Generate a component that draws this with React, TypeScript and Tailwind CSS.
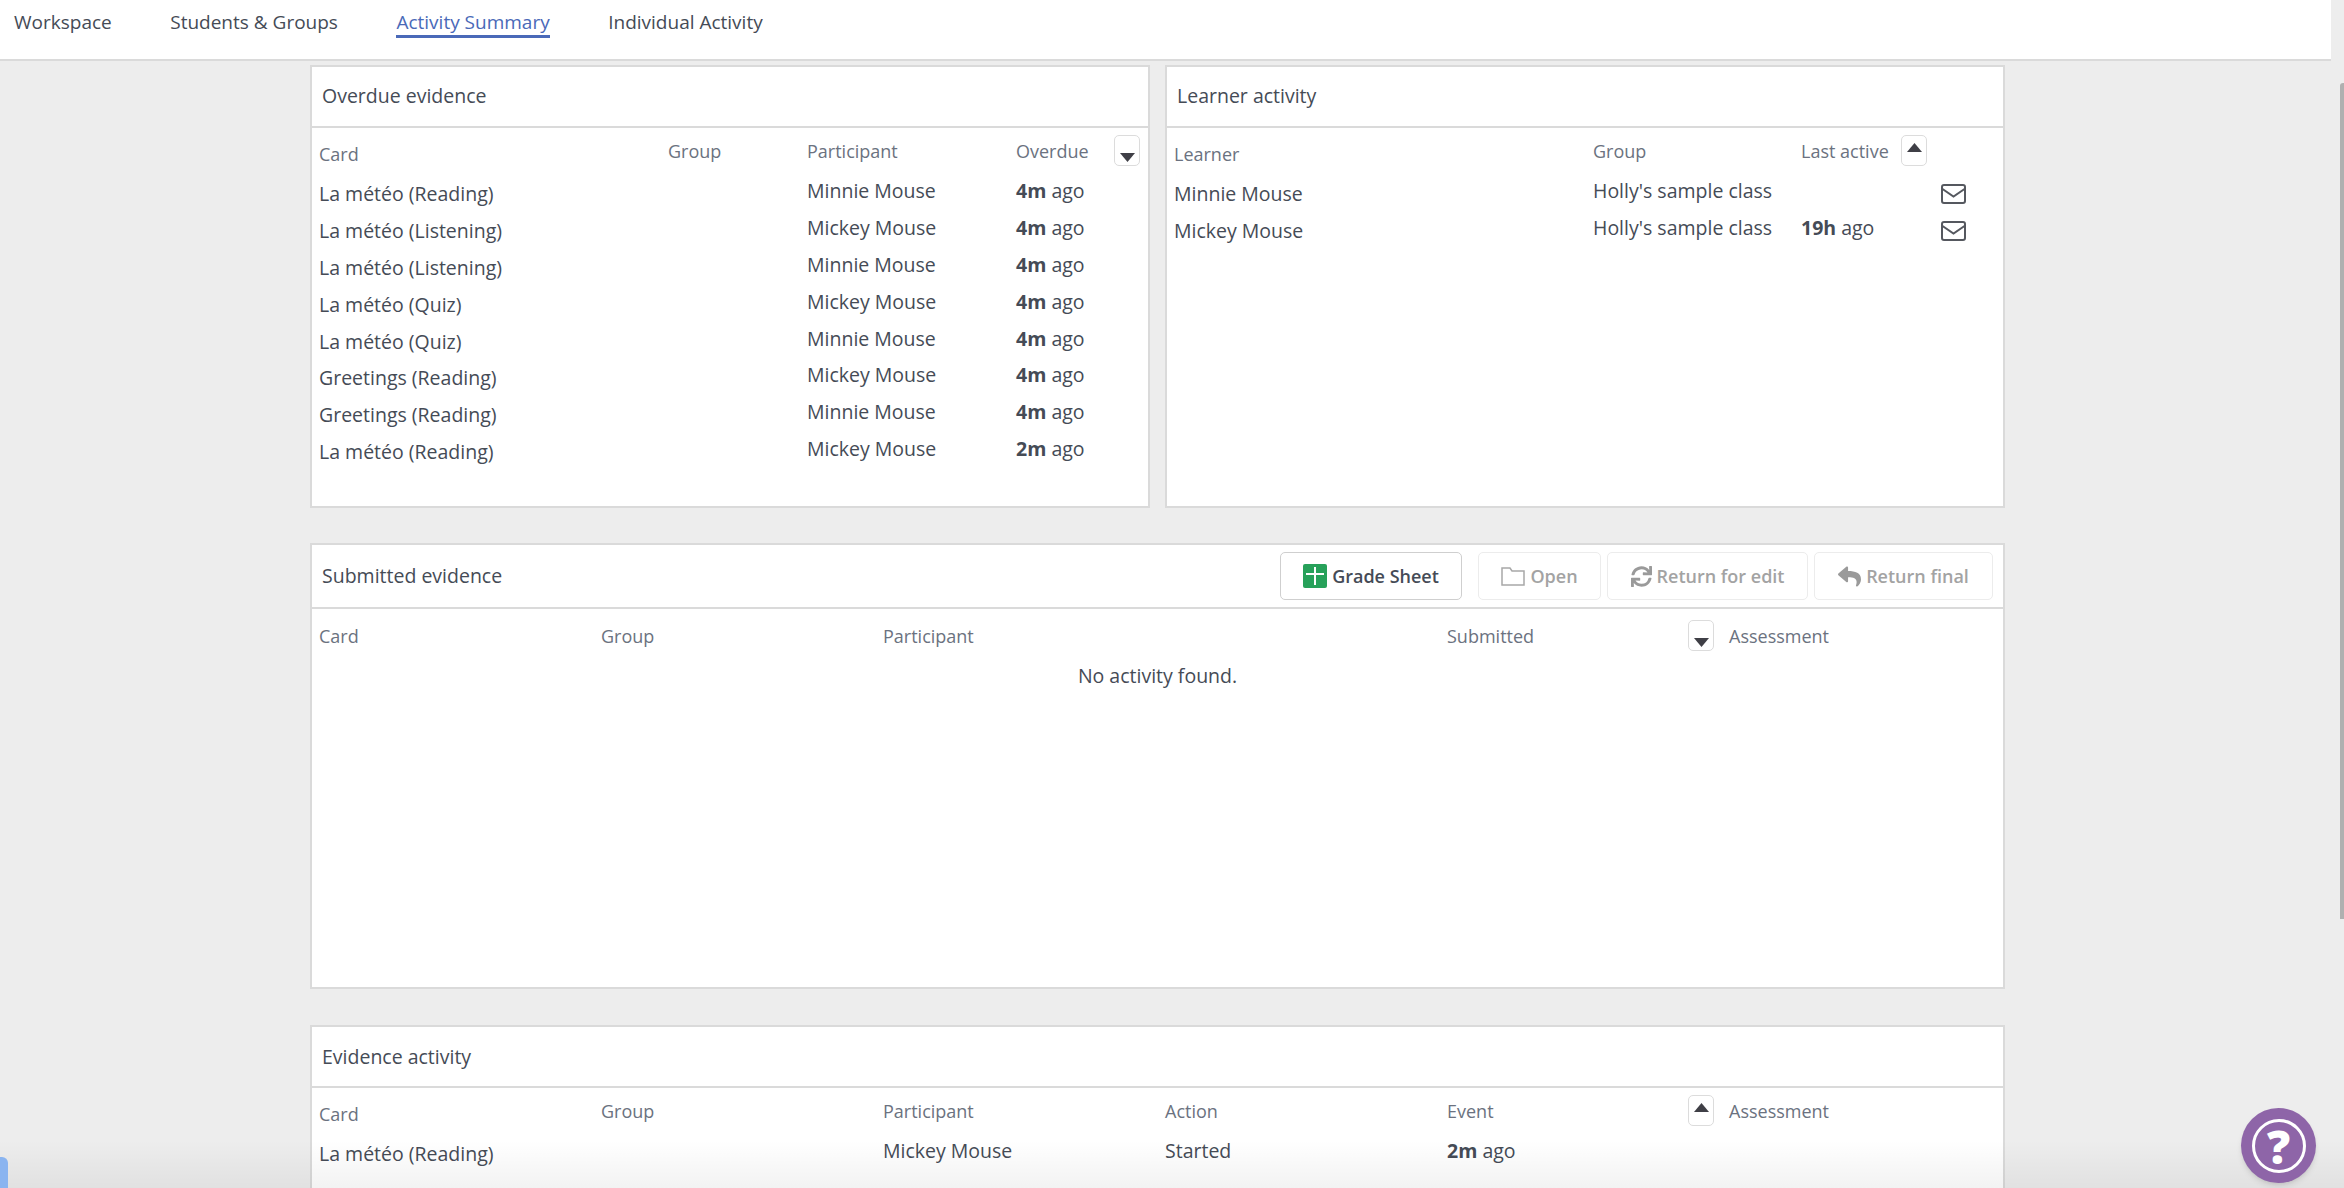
import React from 'react';
import { FaSync, FaReply } from 'react-icons/fa';

const overdueRows = [
  ['La météo (Reading)', 'Minnie Mouse'],
  ['La météo (Listening)', 'Mickey Mouse'],
  ['La météo (Listening)', 'Minnie Mouse'],
  ['La météo (Quiz)', 'Mickey Mouse'],
  ['La météo (Quiz)', 'Minnie Mouse'],
  ['Greetings (Reading)', 'Mickey Mouse'],
  ['Greetings (Reading)', 'Minnie Mouse'],
  ['La météo (Reading)', 'Mickey Mouse', '2m'],
];

const SortButton = ({ dir, className = '' }: { dir: 'up' | 'down'; className?: string }) => (
  <div className={`flex h-[31px] w-[26px] justify-center rounded-[5px] border border-[#dcdcdc] bg-white ${dir === 'up' ? 'items-start pt-[7px]' : 'items-end pb-[3px]'} ${className}`}>
    <svg width="15" height="9" viewBox="0 0 15 9">
      <polygon points={dir === 'up' ? '7.5,0 15,9 0,9' : '0,0 15,0 7.5,9'} fill="#3f3f46" />
    </svg>
  </div>
);

const MailIcon = () => (
  <svg width="25" height="20" viewBox="0 0 25 20" fill="none" stroke="#55585f" strokeWidth="2">
    <rect x="1" y="1" width="23" height="18" rx="2" />
    <path d="M1.5 5 L12.5 12.5 L23.5 5" />
  </svg>
);

const Panel = ({ title, actions, className = '', headerClass = 'h-[61px]', children }: { title: string; actions?: React.ReactNode; className?: string; headerClass?: string; children: React.ReactNode }) => (
  <div className={`border-2 border-[#dadada] bg-white ${className}`}>
    <div className={`flex items-center justify-between border-b-2 border-[#dadada] pl-[10px] pr-[10px] ${headerClass}`}>
      <span>{title}</span>
      {actions}
    </div>
    {children}
  </div>
);

const ToolButton = ({ icon, label, disabled, className = '' }: { icon: React.ReactNode; label: string; disabled?: boolean; className?: string }) => (
  <button className={`flex h-[48px] items-center justify-center gap-[5px] rounded-[5px] border bg-white text-[18px] font-semibold ${disabled ? 'border-[#ececec] text-[#a3a3a3]' : 'border-[#cfcfcf] text-[#454b56]'} ${className}`}>
    {icon}
    {label}
  </button>
);

export default function App() {
  return (
    <div className="relative h-[1188px] w-[2344px] overflow-hidden bg-[#ededed] text-[19.5px] leading-[26px] text-[#454b56]" style={{ fontFamily: '"Open Sans", sans-serif' }}>
      {/* top nav */}
      <div className="flex h-[61px] w-[2331px] gap-[58.5px] border-b-2 border-[#dadada] bg-white pl-[14px] pt-[9px] text-[19px]">
        <a>Workspace</a>
        <a>Students &amp; Groups</a>
        <a className="h-[29px] border-b-[3px] border-[#4a69b8] text-[#4a69b8]">Activity Summary</a>
        <a>Individual Activity</a>
      </div>

      <div className="ml-[310px] mt-[4px] w-[1695px]">
        <div className="flex gap-[15px]">
          {/* Overdue evidence */}
          <Panel title="Overdue evidence" className="h-[443px] w-[840px]" headerClass="h-[61px] pb-[2px]">
            <div className="grid grid-cols-[349px_139px_209px_1fr] pl-[7px] pt-[8px] text-[18px] text-[#6b7280]">
              <div className="pt-[5px]">Card</div>
              <div className="pt-[2px]">Group</div>
              <div className="pt-[2px]">Participant</div>
              <div className="flex justify-between pr-[8px] pt-[2px]">
                Overdue
                <SortButton dir="down" className="-mt-[3px]" />
              </div>
            </div>
            <div className="grid grid-cols-[349px_139px_209px_1fr] pl-[7px] pt-[9px]">
              {overdueRows.map((row, i) => (
                <React.Fragment key={i}>
                  <div className="h-[36.9px] pt-[5px]">{row[0]}</div>
                  <div />
                  <div className="pt-[2px]">{row[1]}</div>
                  <div className="pt-[2px]"><b className="font-bold">{row[2] || '4m'}</b> ago</div>
                </React.Fragment>
              ))}
            </div>
          </Panel>

          {/* Learner activity */}
          <Panel title="Learner activity" className="h-[443px] w-[840px]" headerClass="h-[61px] pb-[2px]">
            <div className="grid grid-cols-[419px_208px_100px_1fr] pl-[7px] pt-[8px] text-[18px] text-[#6b7280]">
              <div className="pt-[5px]">Learner</div>
              <div className="pt-[2px]">Group</div>
              <div className="pt-[2px]">Last active</div>
              <SortButton dir="up" className="-mt-[1px]" />
            </div>
            <div className="grid grid-cols-[419px_208px_140px_1fr] pl-[7px] pt-[9px]">
              <div className="h-[36.9px] pt-[5px]">Minnie Mouse</div>
              <div className="pt-[2px]">Holly's sample class</div>
              <div />
              <div className="pt-[8px]"><MailIcon /></div>
              <div className="h-[36.9px] pt-[5px]">Mickey Mouse</div>
              <div className="pt-[2px]">Holly's sample class</div>
              <div className="pt-[2px]"><b className="font-bold">19h</b> ago</div>
              <div className="pt-[8px]"><MailIcon /></div>
            </div>
          </Panel>
        </div>

        {/* Submitted evidence */}
        <Panel
          title="Submitted evidence"
          className="mt-[35px] h-[446px]"
          headerClass="h-[64px]"
          actions={
            <div className="flex gap-[6px]">
              <ToolButton
                className="mr-[10px] w-[182px]"
                label="Grade Sheet"
                icon={
                  <svg width="24" height="24" viewBox="0 0 24 24">
                    <rect width="24" height="24" rx="2" fill="#27a15a" />
                    <path d="M3 10 H21 M12 3 V21" stroke="#fff" strokeWidth="2" />
                  </svg>
                }
              />
              <ToolButton
                disabled
                className="w-[123px]"
                label="Open"
                icon={
                  <svg width="24" height="20" viewBox="0 0 24 20" fill="none" stroke="#a8a8a8" strokeWidth="1.5">
                    <path d="M1 2 H9 L11 5 H23 V19 H1 Z" />
                  </svg>
                }
              />
              <ToolButton disabled className="w-[201px]" label="Return for edit" icon={<FaSync size={21} color="#9a9a9a" />} />
              <ToolButton disabled className="w-[179px]" label="Return final" icon={<FaReply size={23} color="#9a9a9a" />} />
            </div>
          }
        >
          <div className="grid grid-cols-[282px_282px_564px_241px_41px_1fr] pl-[7px] pt-[11px] text-[18px] text-[#6b7280]">
            <div className="pt-[3px]">Card</div>
            <div className="pt-[3px]">Group</div>
            <div className="pt-[3px]">Participant</div>
            <div className="pt-[3px]">Submitted</div>
            <SortButton dir="down" />
            <div className="pt-[3px]">Assessment</div>
          </div>
          <div className="mt-[12px] text-center">No activity found.</div>
        </Panel>

        {/* Evidence activity */}
        <Panel title="Evidence activity" className="mt-[36px] h-[400px]">
          <div className="grid grid-cols-[282px_282px_282px_282px_241px_41px_1fr] pl-[7px] pt-[7px] text-[18px] text-[#6b7280]">
            <div className="pt-[6px]">Card</div>
            <div className="pt-[3px]">Group</div>
            <div className="pt-[3px]">Participant</div>
            <div className="pt-[3px]">Action</div>
            <div className="pt-[3px]">Event</div>
            <SortButton dir="up" />
            <div className="pt-[3px]">Assessment</div>
          </div>
          <div className="grid grid-cols-[282px_282px_282px_282px_1fr] pl-[7px] pt-[11px]">
            <div className="pt-[3px]">La météo (Reading)</div>
            <div />
            <div>Mickey Mouse</div>
            <div>Started</div>
            <div><b className="font-bold">2m</b> ago</div>
          </div>
        </Panel>
      </div>

      {/* bottom fade */}
      <div className="pointer-events-none absolute bottom-0 left-0 h-[48px] w-full bg-gradient-to-b from-transparent to-black/5" />

      {/* blue tab */}
      <div className="absolute bottom-0 left-0 h-[31px] w-[8px] rounded-tr-[6px] bg-[#8ab4f0]" />

      {/* help */}
      <div className="absolute left-[2241px] top-[1108px] flex h-[75px] w-[75px] items-center justify-center rounded-full bg-[#8e65a8] shadow-md">
        <div className="flex h-[54px] w-[54px] items-center justify-center rounded-full border-[3px] border-white text-[46px] font-extrabold leading-none text-white">?</div>
      </div>

      {/* scrollbar */}
      <div className="absolute right-0 top-[83px] h-[836px] w-[4px] rounded-tl-[3px] bg-[#b0b0b0]" />
    </div>
  );
}
